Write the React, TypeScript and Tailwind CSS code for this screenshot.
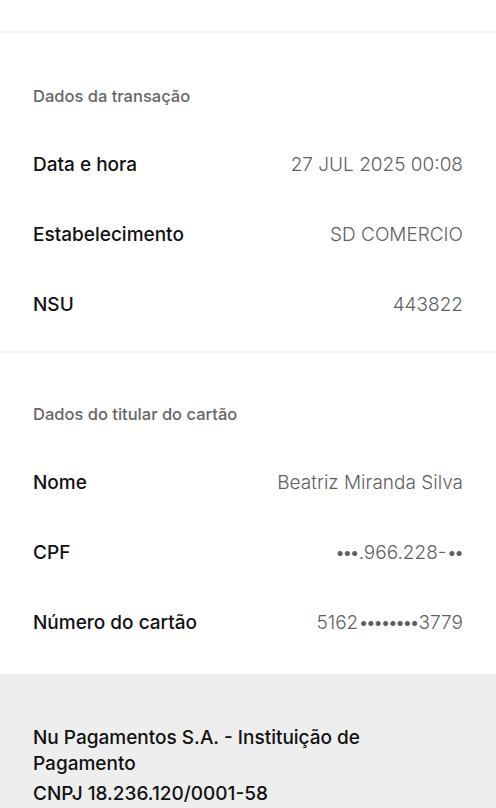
import React from "react";

const font = { fontFamily: "Inter, Roboto, 'Liberation Sans', sans-serif" };

function Dots({ n }: { n: number }) {
  return <span className="tracking-[-3.4px] pr-[2px]">{"•".repeat(n)}</span>;
}

function Row({ label, value }: { label: string; value: React.ReactNode }) {
  return (
    <div className="flex h-[70px] items-center justify-between">
      <span className="text-[19px] font-medium text-[#111111]">{label}</span>
      <span className="text-[19px] font-light text-[#5f5f5f]">{value}</span>
    </div>
  );
}

export default function App() {
  return (
    <div className="w-[496px] h-[808px] overflow-hidden bg-white" style={font}>
      <div className="h-[33px] border-b-2 border-[#f2f2f2]" />
      <div className="px-[33px] pt-[53px] pb-[11px]">
        <div className="h-[20px] leading-[20px] text-[16.5px] font-medium text-[#666666]">Dados da transação</div>
        <div className="mt-[24px]">
          <Row label="Data e hora" value="27 JUL 2025 00:08" />
          <Row label="Estabelecimento" value="SD COMERCIO" />
          <Row label="NSU" value="443822" />
        </div>
      </div>
      <div className="h-[2px] bg-[#f2f2f2]" />
      <div className="px-[33px] pt-[51px] pb-[16px]">
        <div className="h-[20px] leading-[20px] text-[16.5px] font-medium text-[#666666]">Dados do titular do cartão</div>
        <div className="mt-[24px]">
          <Row label="Nome" value="Beatriz Miranda Silva" />
          <Row
            label="CPF"
            value={
              <>
                <Dots n={3} />
                .966.228-
                <Dots n={2} />
              </>
            }
          />
          <Row
            label="Número do cartão"
            value={
              <>
                5162
                <Dots n={8} />
                3779
              </>
            }
          />
        </div>
      </div>
      <div className="bg-[#eeeeee] px-[33px] pt-[51px] pb-[20px]">
        <p className="text-[19px] font-medium leading-[26px] text-[#111111]">
          Nu Pagamentos S.A. - Instituição de
          <br />
          Pagamento
        </p>
        <p className="mt-[4px] text-[19px] font-medium leading-[26px] text-[#111111]">CNPJ 18.236.120/0001-58</p>
      </div>
    </div>
  );
}
